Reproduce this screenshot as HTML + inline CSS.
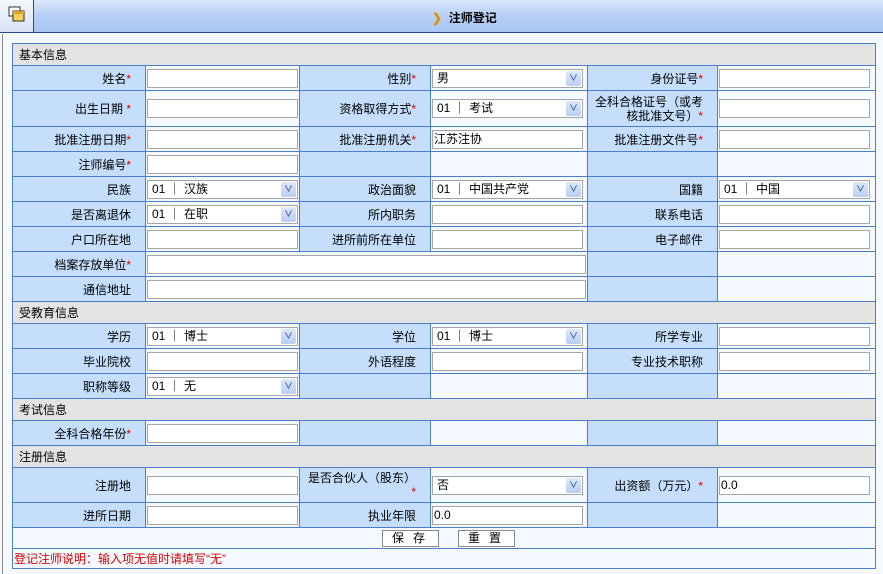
<!DOCTYPE html>
<html><head><meta charset="utf-8"><style>
body{margin:0;width:883px;height:574px;background:#f5f9fe;font:12px "Liberation Sans","Noto Sans CJK SC",sans-serif;color:#000;position:relative;overflow:hidden}
.hdr{position:absolute;left:0;top:0;width:883px;height:32px;background:linear-gradient(180deg,#dbe8fb 0%,#b5cff5 50%,#a9c6f2 100%);border-bottom:1px solid #2b4a8c}
.hdr .ic{position:absolute;left:0;top:0;width:33px;height:32px;background:linear-gradient(#f4f7fc,#d9e3f3);border-right:1px solid #2b4a8c}
.hdr .t{position:absolute;left:432px;top:9px;font-weight:bold;font-size:12px}
.lb{position:absolute;left:2px;top:34px;width:1px;height:540px;background:#8a8a8a}
table{position:absolute;left:12px;top:43px;border-collapse:collapse;table-layout:fixed}
td{border:1px solid #4b7fcc;padding:0;height:24px;white-space:nowrap;overflow:hidden}
td.l{background:#c4defb;text-align:right;padding-right:14px}
td.v{background:#f4f9ff}
tr.sec td{background:#e3e3e3;padding-left:6px;height:21px}
.r{color:#d00}
.i{width:148px;height:17px;border:1px solid #a5a5a5;background:#fff;margin-left:1px;box-sizing:content-box;line-height:17px;padding-left:1px}
.s{position:relative}
.s span{padding-left:3px}
.s b{position:absolute;right:1px;top:1px;width:15px;height:15px;background:linear-gradient(#dde8fb,#b9cdf2);border-radius:2px;color:#4a66a8;font-size:9px;text-align:center;line-height:15px}
.w{width:436px}
.btn{display:inline-block;border:1px solid #888;background:#fff;padding:0 4px 0 9px;height:15px;line-height:15px;letter-spacing:9px}
</style></head><body>
<div class="hdr"><div class="ic"><svg width="33" height="32"><rect x="9" y="7" width="11" height="9" fill="#fff" stroke="#333"/><rect x="13" y="11" width="11" height="10" fill="#f4d25a" stroke="#333"/><rect x="13" y="11" width="11" height="3" fill="#e0a020"/></svg></div>
<div class="t"><span style="color:#e09000">&#x276F;</span>&nbsp; 注师登记</div></div>
<div class="lb"></div>
<table>
<colgroup><col style="width:133px"><col style="width:154px"><col style="width:131px"><col style="width:157px"><col style="width:130px"><col style="width:158px"></colgroup>
<tr class="sec"><td colspan="6">基本信息</td></tr>
<tr><td class="l">姓名<span class="r">*</span></td><td class="v"><div class="i"></div></td><td class="l">性别<span class="r">*</span></td><td class="v"><div class="i s"><span>男</span><b>&#x2228;</b></div></td><td class="l">身份证号<span class="r">*</span></td><td class="v"><div class="i"></div></td></tr>
<tr><td class="l" style="height:35px">出生日期 <span class="r">*</span></td><td class="v"><div class="i"></div></td><td class="l">资格取得方式<span class="r">*</span></td><td class="v"><div class="i s"><span>01 ｜ 考试</span><b>&#x2228;</b></div></td><td class="l" style="white-space:normal;line-height:14px;padding-right:14px;padding-left:6px">全科合格证号（或考核批准文号）<span class="r">*</span></td><td class="v"><div class="i"></div></td></tr>
<tr><td class="l">批准注册日期<span class="r">*</span></td><td class="v"><div class="i"></div></td><td class="l">批准注册机关<span class="r">*</span></td><td class="v"><div class="i">江苏注协</div></td><td class="l">批准注册文件号<span class="r">*</span></td><td class="v"><div class="i"></div></td></tr>
<tr><td class="l">注师编号<span class="r">*</span></td><td class="v"><div class="i"></div></td><td class="l"></td><td class="v"></td><td class="l"></td><td class="v"></td></tr>
<tr><td class="l">民族</td><td class="v"><div class="i s"><span>01 ｜ 汉族</span><b>&#x2228;</b></div></td><td class="l">政治面貌</td><td class="v"><div class="i s"><span>01 ｜ 中国共产党</span><b>&#x2228;</b></div></td><td class="l">国籍</td><td class="v"><div class="i s"><span>01 ｜ 中国</span><b>&#x2228;</b></div></td></tr>
<tr><td class="l">是否离退休</td><td class="v"><div class="i s"><span>01 ｜ 在职</span><b>&#x2228;</b></div></td><td class="l">所内职务</td><td class="v"><div class="i"></div></td><td class="l">联系电话</td><td class="v"><div class="i"></div></td></tr>
<tr><td class="l">户口所在地</td><td class="v"><div class="i"></div></td><td class="l">进所前所在单位</td><td class="v"><div class="i"></div></td><td class="l">电子邮件</td><td class="v"><div class="i"></div></td></tr>
<tr><td class="l">档案存放单位<span class="r">*</span></td><td class="v" colspan="3"><div class="i w"></div></td><td class="l"></td><td class="v"></td></tr>
<tr><td class="l">通信地址</td><td class="v" colspan="3"><div class="i w"></div></td><td class="l"></td><td class="v"></td></tr>
<tr class="sec"><td colspan="6">受教育信息</td></tr>
<tr><td class="l">学历</td><td class="v"><div class="i s"><span>01 ｜ 博士</span><b>&#x2228;</b></div></td><td class="l">学位</td><td class="v"><div class="i s"><span>01 ｜ 博士</span><b>&#x2228;</b></div></td><td class="l">所学专业</td><td class="v"><div class="i"></div></td></tr>
<tr><td class="l">毕业院校</td><td class="v"><div class="i"></div></td><td class="l">外语程度</td><td class="v"><div class="i"></div></td><td class="l">专业技术职称</td><td class="v"><div class="i"></div></td></tr>
<tr><td class="l">职称等级</td><td class="v"><div class="i s"><span>01 ｜ 无</span><b>&#x2228;</b></div></td><td class="l"></td><td class="v"></td><td class="l"></td><td class="v"></td></tr>
<tr class="sec"><td colspan="6">考试信息</td></tr>
<tr><td class="l">全科合格年份<span class="r">*</span></td><td class="v"><div class="i"></div></td><td class="l"></td><td class="v"></td><td class="l"></td><td class="v"></td></tr>
<tr class="sec"><td colspan="6">注册信息</td></tr>
<tr><td class="l" style="height:34px">注册地</td><td class="v"><div class="i"></div></td><td class="l" style="white-space:normal;line-height:14px;padding-left:6px">是否合伙人（股东）<br><span class="r">*</span></td><td class="v"><div class="i s"><span>否</span><b>&#x2228;</b></div></td><td class="l">出资额（万元）<span class="r">*</span></td><td class="v"><div class="i">0.0</div></td></tr>
<tr><td class="l">进所日期</td><td class="v"><div class="i"></div></td><td class="l">执业年限</td><td class="v"><div class="i">0.0</div></td><td class="l"></td><td class="v"></td></tr>
<tr><td colspan="6" class="v" style="height:20px;padding-left:369px"><span class="btn">保存</span><span style="display:inline-block;width:19px"></span><span class="btn">重置</span></td></tr>
<tr><td colspan="6" class="v" style="height:19px;color:#e00000;padding-left:1px">登记注师说明：输入项无值时请填写“无”</td></tr>
</table>
</body></html>
